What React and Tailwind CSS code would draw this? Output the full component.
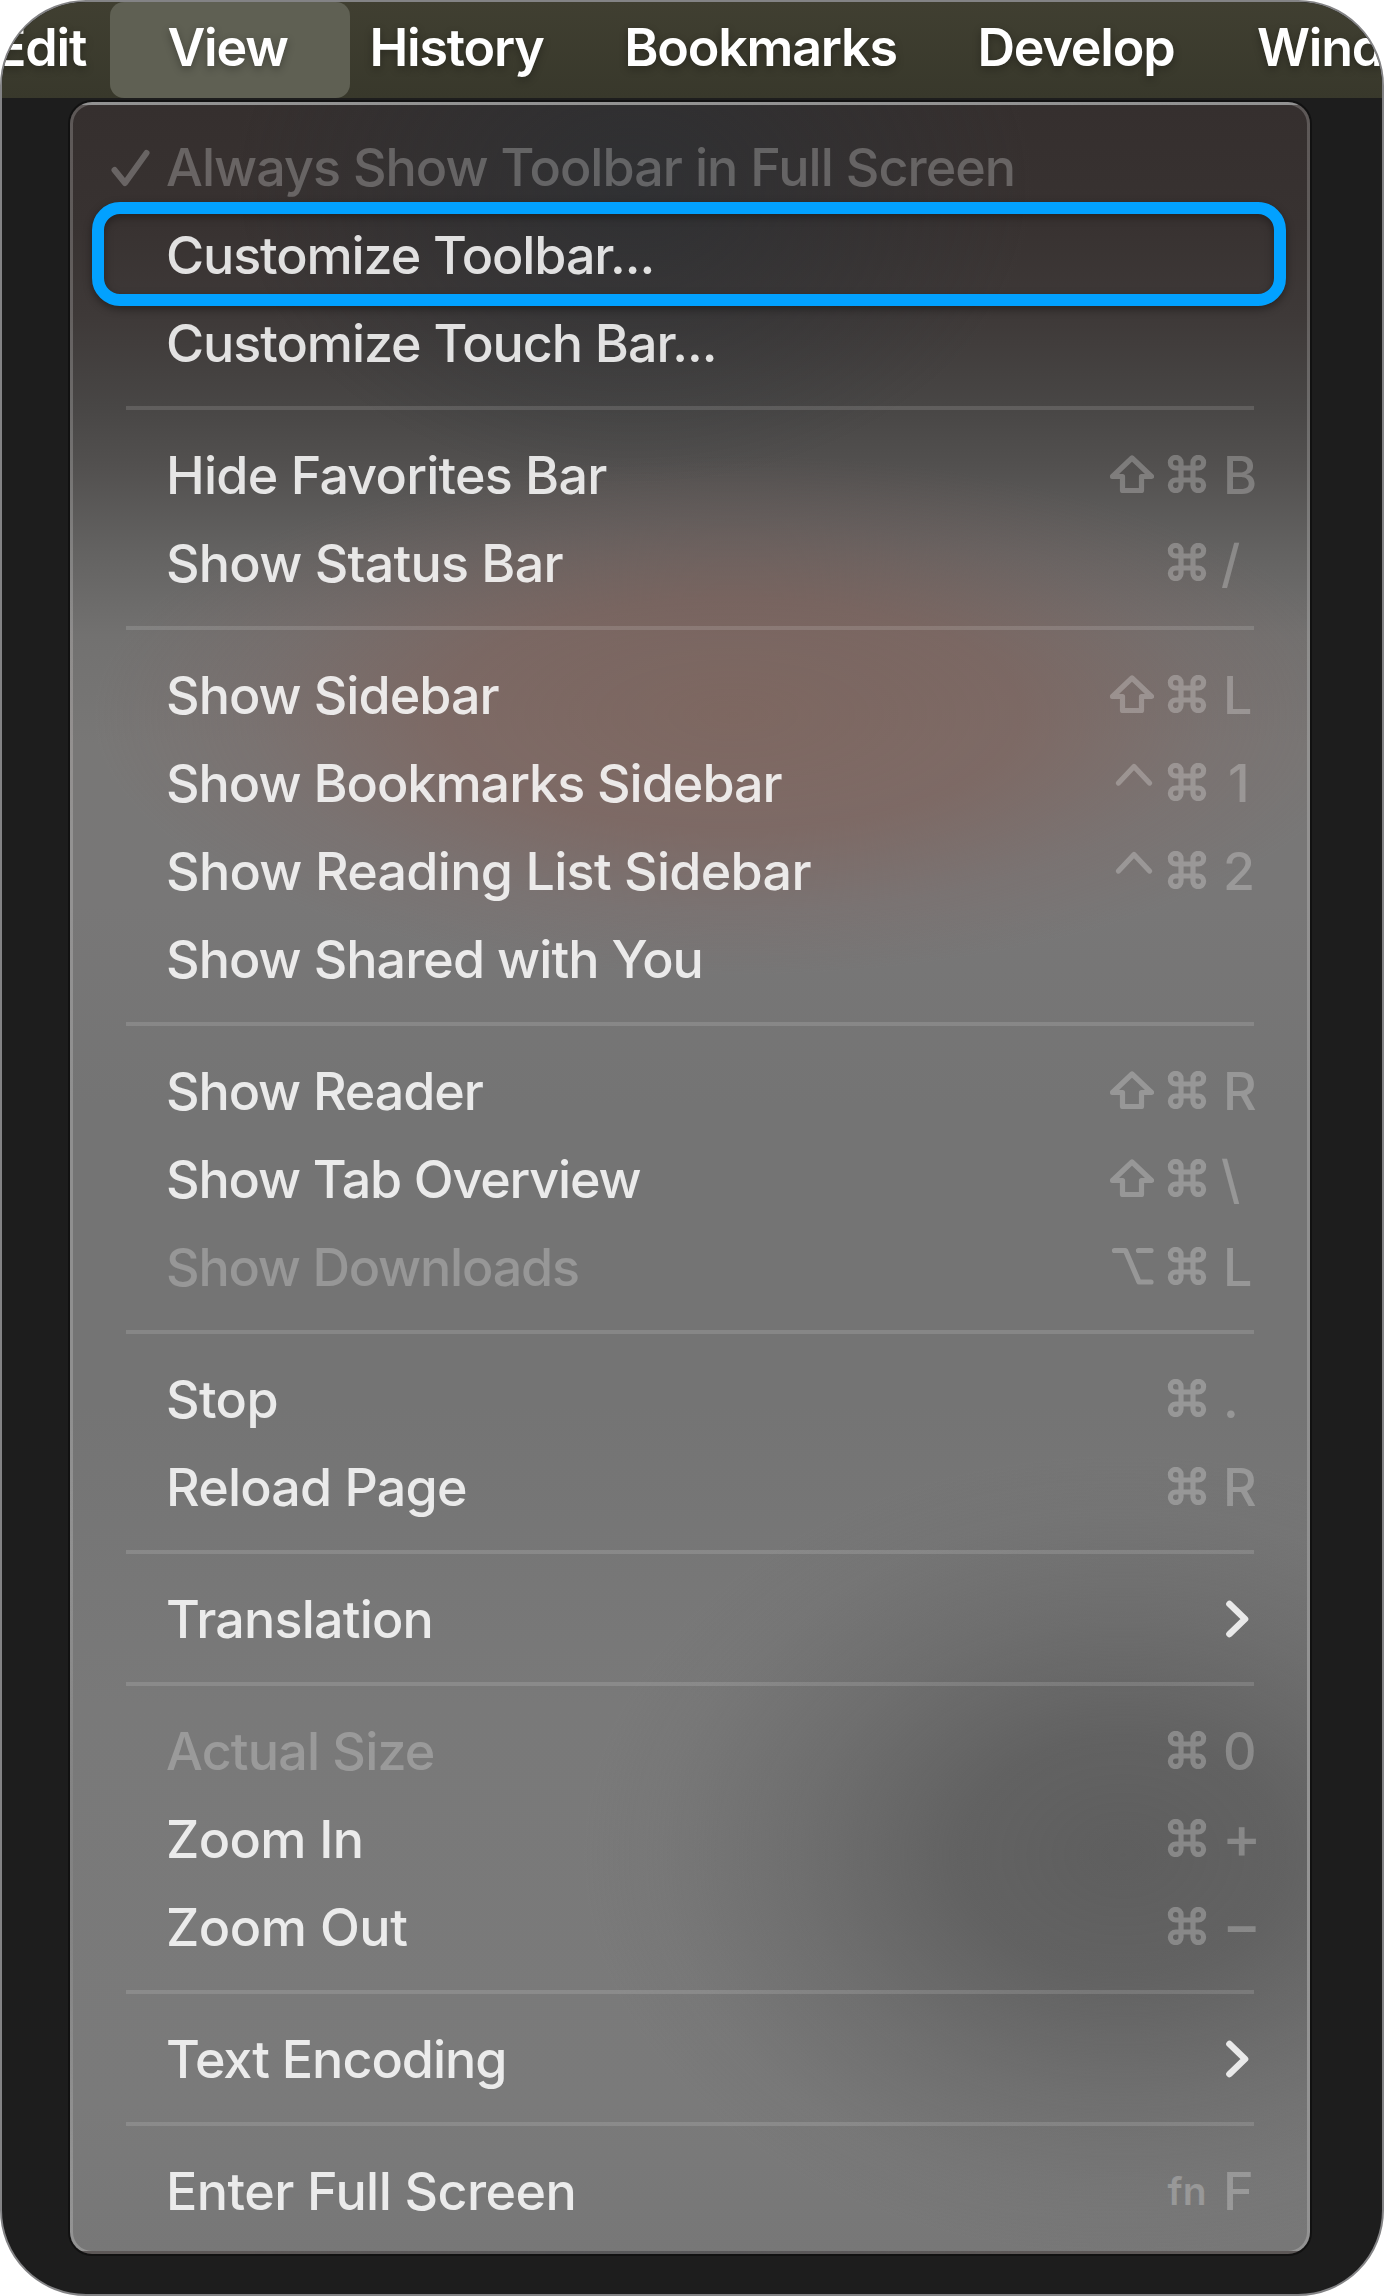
import { clsx } from "clsx";

const MENU_BAR = [
  { label: "Edit", width: "w-[165px]", offset: "-left-[4px]" },
  { label: "View", width: "w-[201px]", open: true },
  { label: "History", width: "w-[257px]" },
  { label: "Bookmarks", width: "w-[351px]" },
  { label: "Develop", width: "w-[280px]" },
  { label: "Window", width: "w-[280px]" },
];

const GROUPS = [
  [
    { label: "Always Show Toolbar in Full Screen", checked: true, disabled: true },
    { label: "Customize Toolbar...", highlighted: true, tracking: "tracking-[-1.1px]" },
    { label: "Customize Touch Bar...", tracking: "tracking-[-1.05px]" },
  ],
  [
    { label: "Hide Favorites Bar", mods: ["shift", "cmd"], hotkey: "B", tracking: "tracking-[-0.75px]" },
    { label: "Show Status Bar", mods: ["cmd"], hotkey: "/", tracking: "tracking-[-0.75px]" },
  ],
  [
    { label: "Show Sidebar", mods: ["shift", "cmd"], hotkey: "L" },
    { label: "Show Bookmarks Sidebar", mods: ["ctrl", "cmd"], hotkey: "1", tracking: "tracking-[-1px]" },
    { label: "Show Reading List Sidebar", mods: ["ctrl", "cmd"], hotkey: "2", tracking: "tracking-[-0.7px]" },
    { label: "Show Shared with You" },
  ],
  [
    { label: "Show Reader", mods: ["shift", "cmd"], hotkey: "R", tracking: "tracking-[-1.1px]" },
    { label: "Show Tab Overview", mods: ["shift", "cmd"], hotkey: "\\", tracking: "tracking-[-1.15px]" },
    { label: "Show Downloads", mods: ["opt", "cmd"], hotkey: "L", disabled: true, tracking: "tracking-[-1.2px]" },
  ],
  [
    { label: "Stop", mods: ["cmd"], hotkey: ".", tracking: "tracking-[-0.6px]" },
    { label: "Reload Page", mods: ["cmd"], hotkey: "R", tracking: "tracking-[-0.8px]" },
  ],
  [{ label: "Translation", submenu: true, tracking: "tracking-[-0.8px]" }],
  [
    { label: "Actual Size", mods: ["cmd"], hotkey: "0", disabled: true, tracking: "tracking-[-0.8px]" },
    { label: "Zoom In", mods: ["cmd"], hotkey: "+", tracking: "tracking-[-0.6px]" },
    { label: "Zoom Out", mods: ["cmd"], hotkey: "−", tracking: "tracking-[-0.45px]" },
  ],
  [{ label: "Text Encoding", submenu: true, tracking: "tracking-[-1px]" }],
  [{ label: "Enter Full Screen", mods: ["fn"], hotkey: "F", tracking: "tracking-[-0.55px]" }],
];

const GLYPHS = {
  shift: "M22 3L41.5 21.5H31.5V35.5H12.5V21.5H2.5Z",
  cmd: "M16 25V7.7a5.3 5.3 0 1 0-5.3 5.3H33.3a5.3 5.3 0 1 0-5.3-5.3V30.3a5.3 5.3 0 1 0 5.3-5.3H10.7a5.3 5.3 0 1 0 5.3 5.3V25",
  ctrl: "M8.5 20L24 3.5L39.5 20",
  opt: "M4.5 3.5H15.5L29 35H41M28.5 3.5H41",
};

function Modifier({ name }) {
  if (name === "fn") {
    return <span className="w-11 text-center text-[39px] font-semibold leading-none">fn</span>;
  }
  return (
    <svg width="44" height="38" viewBox="0 0 44 38" fill="none" stroke="currentColor"
      strokeWidth="5.2" strokeLinecap="round" strokeLinejoin="round">
      <path d={GLYPHS[name]} />
    </svg>
  );
}

function Shortcut({ mods, hotkey }) {
  const isSign = hotkey === "+" || hotkey === "−";

  return (
    <div className="ml-auto flex h-full items-center text-white/25">
      <div className="flex items-center gap-[11px]">
        {mods.map((m) => (
          <Modifier key={m} name={m} />
        ))}
      </div>
      <span
        className={clsx(
          "relative ml-[14px] w-[84px] leading-none",
          isSign ? "-left-px -top-[2px] text-[59px]" : "top-[1.5px]",
          hotkey === "1" && "left-[5px]",
          (hotkey === "/" || hotkey === "\\") && "-left-[2px]"
        )}
      >
        {hotkey}
      </span>
    </div>
  );
}

function MenuItem({ item }) {
  return (
    <li className="relative flex h-[88px] items-center pl-[93px]">
      {item.highlighted && (
        <div className="absolute -top-[8px] -bottom-[8px] left-[19px] right-[21px] rounded-[28px] border-[12px] border-[#02a1ff] shadow-[0_3px_8px_rgba(0,0,0,0.4),inset_0_3px_8px_rgba(0,0,0,0.35)]" />
      )}
      {item.checked && (
        <svg className="absolute left-[38px] top-[27px] text-white/25" width="40" height="38" viewBox="0 0 40 38"
          fill="none" stroke="currentColor" strokeWidth="6" strokeLinecap="round" strokeLinejoin="round">
          <path d="M3.5 21L14 34L35.5 4" />
        </svg>
      )}
      <span
        className={clsx(
          "relative top-[1.5px] whitespace-nowrap",
          item.tracking || "tracking-[-0.95px]",
          item.disabled ? "text-white/25" : "text-white/85"
        )}
      >
        {item.label}
      </span>
      {item.hotkey && <Shortcut mods={item.mods} hotkey={item.hotkey} />}
      {item.submenu && (
        <svg className="ml-auto mr-[56px] text-white/85" width="26" height="40" viewBox="0 0 26 40"
          fill="none" stroke="currentColor" strokeWidth="6.6" strokeLinecap="round" strokeLinejoin="round">
          <path d="M4.5 6L20 21L4.5 36" />
        </svg>
      )}
    </li>
  );
}

function MenuBar() {
  return (
    <nav className="flex h-[96px] shrink-0 bg-gradient-to-b from-[#403f31] to-[#38382b] font-[560] tracking-[-1.2px] text-white [text-shadow:0_3px_8px_rgba(0,0,0,0.3)]">
      <div className="-ml-[40px] flex">
        {MENU_BAR.map((m) => (
          <div key={m.label} className={clsx("relative flex shrink-0 items-center justify-center pb-[4px]", m.width)}>
            {m.open && <div className="absolute inset-y-0 -left-[17px] -right-[22px] rounded-[14px] bg-[#5f6053]" />}
            <span className={clsx("relative", m.offset)}>{m.label}</span>
          </div>
        ))}
      </div>
    </nav>
  );
}

export default function App() {
  return (
    <div className="h-[2296px] w-[1384px] bg-white">
      <div className="flex h-full flex-col overflow-hidden rounded-[86px] border-2 border-[#838385] bg-[#1d1d1d] font-['Inter',sans-serif] text-[52px] font-medium">
        <MenuBar />
        <ul
          className={clsx(
            "ml-[68px] mt-[4px] h-[2152px] w-[1240px] rounded-[22px] border-[3px] border-white/20 pt-[17px] shadow-[0_0_0_2px_#111]",
            "bg-[radial-gradient(ellipse_540px_400px_at_1050px_1750px,rgba(90,90,90,0.85),rgba(90,90,90,0.75)_30%,rgba(95,95,95,0.4)_60%,rgba(105,105,105,0.12)_85%,transparent),radial-gradient(ellipse_640px_260px_at_660px_610px,rgba(130,94,84,0.6),rgba(130,94,86,0.52)_45%,rgba(130,98,94,0.2)_75%,transparent),radial-gradient(ellipse_400px_300px_at_560px_80px,rgba(40,48,54,0.5),transparent),linear-gradient(180deg,#352f2e_0px,#383231_120px,#3e3938_210px,#484645_300px,#52504f_360px,#646362_450px,#727170_530px,#787776_640px,#787777_800px,#747474_1000px,#747474_1300px,#797979_1600px,#7a7a7a_2000px,#777777_2150px)]"
          )}
        >
          {GROUPS.map((group, i) => (
            <li key={i}>
              {i > 0 && (
                <div className="flex h-[44px] items-center pl-[53px] pr-[53px]">
                  <div className="h-[4px] w-full bg-white/13" />
                </div>
              )}
              <ul>
                {group.map((item) => (
                  <MenuItem key={item.label} item={item} />
                ))}
              </ul>
            </li>
          ))}
        </ul>
      </div>
    </div>
  );
}
